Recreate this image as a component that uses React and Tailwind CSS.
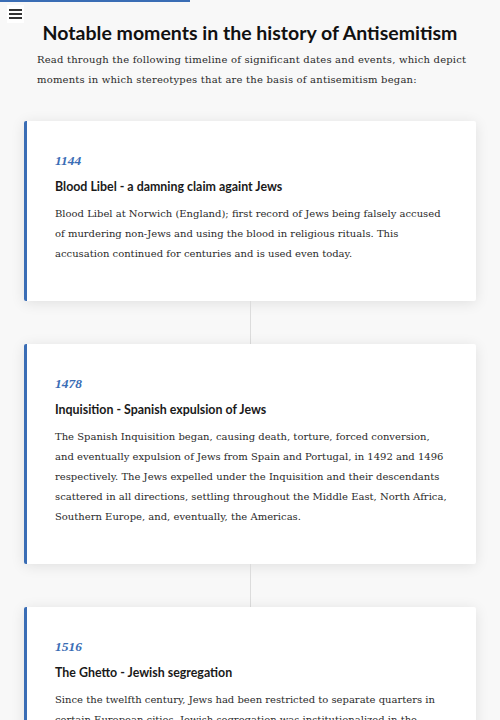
import React from "react";

const events = [
  {
    year: "1144",
    title: "Blood Libel - a damning claim againt Jews",
    body:
      "Blood Libel at Norwich (England); first record of Jews being falsely accused of murdering non-Jews and using the blood in religious rituals. This accusation continued for centuries and is used even today.",
  },
  {
    year: "1478",
    title: "Inquisition - Spanish expulsion of Jews",
    body:
      "The Spanish Inquisition began, causing death, torture, forced conversion, and eventually expulsion of Jews from Spain and Portugal, in 1492 and 1496 respectively. The Jews expelled under the Inquisition and their descendants scattered in all directions, settling throughout the Middle East, North Africa, Southern Europe, and, eventually, the Americas.",
  },
  {
    year: "1516",
    title: "The Ghetto - Jewish segregation",
    body:
      "Since the twelfth century, Jews had been restricted to separate quarters in certain European cities. Jewish segregation was institutionalized in the sixteenth century, when the first ghetto was established in Venice.",
  },
];

const serif = "font-['DejaVu_Serif',serif]";

export default function App() {
  return (
    <div className="relative min-h-screen bg-[#f8f8f8] pb-10">
      <div className="absolute left-0 top-0 h-[2px] w-[190px] bg-[#3a6db5]" />
      <div className="absolute left-[7px] top-[5px] flex h-[18px] w-[17px] flex-col items-center justify-center gap-[2.5px] bg-white">
        <span className="block h-[1.5px] w-[13px] bg-[#333]" />
        <span className="block h-[1.5px] w-[13px] bg-[#333]" />
        <span className="block h-[1.5px] w-[13px] bg-[#333]" />
      </div>

      <h1 className="pt-[21px] text-center font-['Lato',sans-serif] text-[19.5px] font-bold leading-[24px] text-[#111]">
        Notable moments in the history of Antisemitism
      </h1>
      <p className={`mt-[5px] pl-[37px] pr-[18px] ${serif} text-[10px] tracking-[0.2px] leading-[20px] text-[#2a2a2a]`}>
        Read through the following timeline of significant dates and events, which depict moments in which stereotypes that are the basis of antisemitism began:
      </p>

      <div className="mt-[31px] flex flex-col items-center">
        {events.map((e, i) => (
          <React.Fragment key={e.year}>
            {i > 0 && <div className="h-[43px] w-px bg-[#dcdcdc]" />}
            <div className="w-[452px] rounded-[2px] border-l-[3px] border-[#3a6db5] bg-white pb-[37px] pl-[28px] pr-[27px] pt-[30px] shadow-[0_2px_14px_rgba(0,0,0,0.10)]">
              <div className="font-['Liberation_Serif',serif] text-[13.5px] font-bold italic leading-[20px] text-[#3a6db5]">
                {e.year}
              </div>
              <div className="mt-[6px] font-['Lato',sans-serif] text-[12.4px] font-bold leading-[20px] text-[#1a1a1a]">
                {e.title}
              </div>
              <p className={`mt-[7px] ${serif} text-[10px] leading-[20px] text-[#2a2a2a]`}>
                {e.body}
              </p>
            </div>
          </React.Fragment>
        ))}
      </div>
    </div>
  );
}
